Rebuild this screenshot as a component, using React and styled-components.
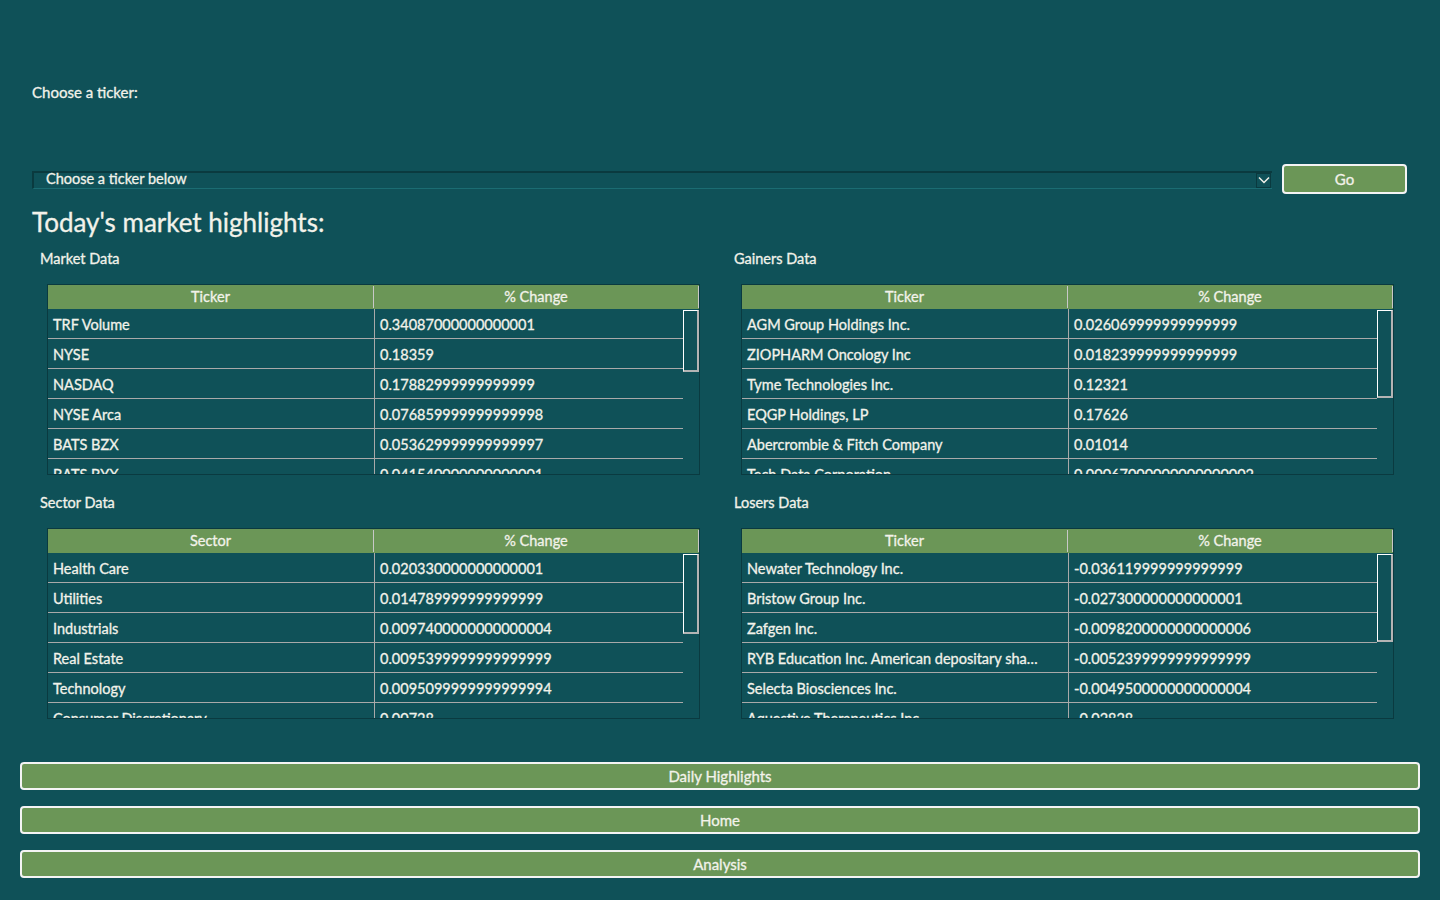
import React from "react";
import styled, { createGlobalStyle } from "styled-components";

const market = [
  ["TRF Volume", "0.34087000000000001"],
  ["NYSE", "0.18359"],
  ["NASDAQ", "0.17882999999999999"],
  ["NYSE Arca", "0.076859999999999998"],
  ["BATS BZX", "0.053629999999999997"],
  ["BATS BYX", "0.041540000000000001"],
];

const gainers = [
  ["AGM Group Holdings Inc.", "0.026069999999999999"],
  ["ZIOPHARM Oncology Inc", "0.018239999999999999"],
  ["Tyme Technologies Inc.", "0.12321"],
  ["EQGP Holdings, LP", "0.17626"],
  ["Abercrombie & Fitch Company", "0.01014"],
  ["Tech Data Corporation", "0.00067000000000000002"],
];

const sectors = [
  ["Health Care", "0.020330000000000001"],
  ["Utilities", "0.014789999999999999"],
  ["Industrials", "0.0097400000000000004"],
  ["Real Estate", "0.0095399999999999999"],
  ["Technology", "0.0095099999999999994"],
  ["Consumer Discretionary", "0.00728"],
];

const losers = [
  ["Newater Technology Inc.", "-0.036119999999999999"],
  ["Bristow Group Inc.", "-0.027300000000000001"],
  ["Zafgen Inc.", "-0.0098200000000000006"],
  ["RYB Education Inc. American depositary sha\u2026", "-0.0052399999999999999"],
  ["Selecta Biosciences Inc.", "-0.0049500000000000004"],
  ["Aquestive Therapeutics Inc.", "-0.02828"],
];

const DataTable = ({ title, first, rows, handle }) => (
  <Section>
    <SectionTitle>{title}</SectionTitle>
    <Frame>
      <HeaderRow>
        <HeadCell>{first}</HeadCell>
        <HeadCell>% Change</HeadCell>
      </HeaderRow>
      <Body>
        <Rows>
          {rows.map(([name, value]) => (
            <Row key={name}>
              <Cell>{name}</Cell>
              <Cell $last>{value}</Cell>
            </Row>
          ))}
        </Rows>
        <Gutter>
          <Handle $h={handle} />
        </Gutter>
      </Body>
    </Frame>
  </Section>
);

const App = () => {
  return (
    <>
      <GlobalStyle />
      <Page>
        <Top>
          <Label>Choose a ticker:</Label>
          <PickerRow>
            <Combo>
              <ComboText>Choose a ticker below</ComboText>
              <Arrow>
                <svg width="12" height="8" viewBox="0 0 12 8">
                  <path d="M1 1.5 L6 6.5 L11 1.5" fill="none" stroke="#f2f2ea" strokeWidth="1.5" />
                </svg>
              </Arrow>
            </Combo>
            <GoButton>Go</GoButton>
          </PickerRow>
          <Heading>Today's market highlights:</Heading>
        </Top>
        <Grid>
          <DataTable title="Market Data" first="Ticker" rows={market} handle={62} />
          <DataTable title="Gainers Data" first="Ticker" rows={gainers} handle={88} />
          <DataTable title="Sector Data" first="Sector" rows={sectors} handle={80} />
          <DataTable title="Losers Data" first="Ticker" rows={losers} handle={88} />
        </Grid>
        <Nav>
          <NavButton>Daily Highlights</NavButton>
          <NavButton>Home</NavButton>
          <NavButton>Analysis</NavButton>
        </Nav>
      </Page>
    </>
  );
};

const GlobalStyle = createGlobalStyle`
  body {
    margin: 0;
    background: #0f5158;
    font-family: Lato, "Open Sans", sans-serif;
    color: #f2f2ea;
    -webkit-text-stroke: 0.3px #f2f2ea;
  }
`;

const Page = styled.div`
  width: 1440px;
  height: 900px;
  box-sizing: border-box;
  padding-top: 81px;
`;

const Top = styled.div`
  padding: 0 33px 0 32px;
`;

const Label = styled.div`
  font-size: 15px;
  line-height: 22px;
  height: 22px;
`;

const PickerRow = styled.div`
  display: flex;
  align-items: center;
  gap: 10px;
  margin-top: 61px;
`;

const Combo = styled.div`
  flex: 1;
  height: 18px;
  display: flex;
  align-items: flex-start;
  justify-content: space-between;
  box-sizing: border-box;
  border-top: 2px solid #0a3a3f;
  border-left: 2px solid #0a3a3f;
  border-bottom: 1px solid #1b6c72;
  padding-left: 12px;
  margin-top: 1px;
`;

const ComboText = styled.span`
  font-size: 14.5px;
  line-height: 11px;
`;

const Arrow = styled.span`
  width: 15px;
  height: 15px;
  box-sizing: border-box;
  border: 1px solid #0a3a3f;
  display: flex;
  align-items: center;
  justify-content: center;
  margin-right: 1px;
`;

const GoButton = styled.button`
  width: 125px;
  height: 30px;
  box-sizing: border-box;
  background: #6b9657;
  border: 2px solid #f4f4f4;
  border-radius: 4px;
  color: #f2f2ea;
  -webkit-text-stroke: 0.3px #f2f2ea;
  font-family: Lato, "Open Sans", sans-serif;
  font-size: 15px;
  padding: 0;
`;

const Heading = styled.h1`
  margin: 13px 0 0;
  font-size: 26px;
  font-weight: 400;
  line-height: 30px;
`;

const Grid = styled.div`
  display: grid;
  grid-template-columns: 694px 694px;
  padding-left: 40px;
  row-gap: 18px;
  margin-top: 12px;
`;

const Section = styled.div`
  display: flex;
  flex-direction: column;
`;

const SectionTitle = styled.div`
  font-size: 14.5px;
  line-height: 20px;
  height: 20px;
`;

const Frame = styled.div`
  margin: 15px 0 0 7px;
  width: 653px;
  height: 191px;
  box-sizing: border-box;
  border: 1px solid #0a3a40;
  overflow: hidden;
  display: flex;
  flex-direction: column;
`;

const HeaderRow = styled.div`
  display: grid;
  grid-template-columns: 326px 1fr;
  height: 24px;
  background: #6b9657;
  flex-shrink: 0;
`;

const HeadCell = styled.div`
  text-align: center;
  font-size: 14.5px;
  border-right: 1px solid #c8c8c8;
  margin: 1px 0;
  line-height: 22px;
`;

const Body = styled.div`
  display: flex;
  flex: 1;
  min-height: 0;
`;

const Rows = styled.div`
  width: 635px;
`;

const Row = styled.div`
  display: grid;
  grid-template-columns: 326px 1fr;
  height: 30px;
  border-bottom: 1px solid #a9a9a9;
  box-sizing: border-box;
`;

const Cell = styled.div`
  font-size: 14.5px;
  line-height: 29px;
  padding: 1px 0 0 5px;
  border-left: ${(p) => (p.$last ? "1px solid #a9a9a9" : "none")};
  white-space: nowrap;
  overflow: hidden;
  text-overflow: ellipsis;
`;

const Gutter = styled.div`
  flex: 1;
  padding-top: 1px;
`;

const Handle = styled.div`
  height: ${(p) => p.$h}px;
  box-sizing: border-box;
  border-top: 1px solid #ffffff;
  border-left: 1px solid #ffffff;
  border-right: 2px solid #b4b4b4;
  border-bottom: 2px solid #b4b4b4;
`;

const Nav = styled.div`
  display: flex;
  flex-direction: column;
  gap: 16px;
  padding: 0 20px;
  margin-top: 43px;
`;

const NavButton = styled.button`
  height: 28px;
  box-sizing: border-box;
  background: #6b9657;
  border: 2px solid #f4f4f4;
  border-radius: 4px;
  color: #f2f2ea;
  -webkit-text-stroke: 0.3px #f2f2ea;
  font-family: Lato, "Open Sans", sans-serif;
  font-size: 15px;
  padding: 0;
`;

export default App;
